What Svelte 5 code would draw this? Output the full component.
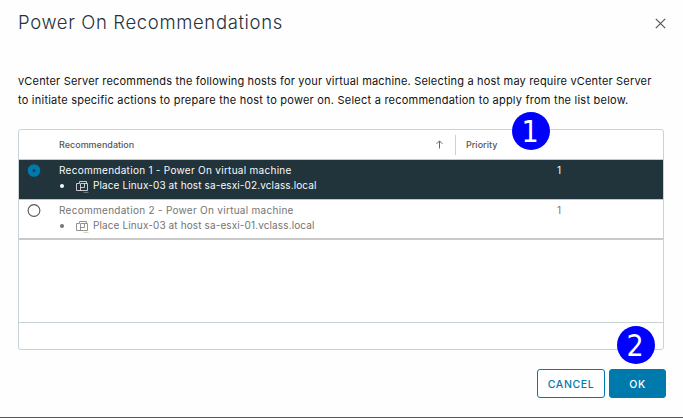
<script>
  const rows = [
    { id: 1, title: 'Recommendation 1 - Power On virtual machine', detail: 'Place Linux-03 at host sa-esxi-02.vclass.local', priority: 1 },
    { id: 2, title: 'Recommendation 2 - Power On virtual machine', detail: 'Place Linux-03 at host sa-esxi-01.vclass.local', priority: 1 }
  ];
  let selected = $state(1);
</script>

<div class="dialog">
  <header>
    <h1>Power On Recommendations</h1>
    <button class="close" aria-label="Close">
      <svg width="12" height="12" viewBox="0 0 12 12"><path d="M1.8 .8 11.2 10.2M11.2 .8 1.8 10.2" /></svg>
    </button>
  </header>

  <p class="intro">
    <span class="l1">vCenter Server recommends the following hosts for your virtual machine. Selecting a host may require vCenter Server</span>
    <span class="l2">to initiate specific actions to prepare the host to power on. Select a recommendation to apply from the list below.</span>
  </p>

  <div class="grid">
    <div class="head">
      <span class="h-rec">Recommendation</span>
      <svg class="sort" width="7" height="9" viewBox="0 0 7 9"><path d="M3.5 8.5V1M.6 3.8 3.5.9 6.4 3.8" /></svg>
      <span class="h-pri">Priority</span>
    </div>
    {#each rows as row (row.id)}
      <div class="row" class:selected={selected === row.id}>
        <button class="radio" aria-label={row.title} onclick={() => (selected = row.id)}>
          <svg width="14" height="14" viewBox="0 0 14 14">
            {#if selected === row.id}
              <circle cx="7" cy="6.5" r="6.3" fill="#0079ad" />
              <circle cx="7" cy="6.5" r="1.5" fill="#1b3f55" />
            {:else}
              <circle cx="7" cy="6.5" r="5.9" fill="#fff" stroke="#555" stroke-width="1.1" />
            {/if}
          </svg>
        </button>
        <div class="text">
          <div class="title">{row.title}</div>
          <div class="detail">
            <i class="dot"></i>
            <svg width="13" height="13" viewBox="0 0 13 13">
              <path d="M3.5 3.5V1.5h7v2M3.5 3.5h-3v7h5M4.5 10.5v-7h7v7zM4.5 7.5h4v-4" />
              <path class="base" d="M7.5 12.4h5" />
            </svg>
            <span class="place">{row.detail}</span>
          </div>
        </div>
        <div class="pri">{row.priority}</div>
      </div>
    {/each}
    <div class="empty"></div>
    <div class="foot"></div>
  </div>

  <footer>
    <button class="btn cancel">CANCEL</button>
    <button class="btn ok">OK</button>
  </footer>

  <div class="badge one">1</div>
  <div class="badge two">2</div>
</div>

<style>
  :global(body) { margin: 0; background: #fefefe; }
  .dialog {
    position: relative;
    box-sizing: border-box;
    width: 683px;
    height: 418px;
    padding: 0 17px 0 18px;
    border-bottom: 1px solid #555;
    background: #fefefe;
    font-family: Inter, 'Liberation Sans', sans-serif;
    overflow: hidden;
  }
  button { font-family: inherit; margin: 0; padding: 0; border: 0; background: none; }
  svg { display: block; fill: none; }
  header { display: flex; justify-content: space-between; height: 72px; }
  h1 {
    margin: 10px 0 0;
    font-size: 18.5px;
    line-height: 25px;
    font-weight: 300;
    letter-spacing: 0.64px;
    color: #25333d;
    white-space: nowrap;
    height: 25px;
  }
  .close { width: 12px; height: 12px; margin: 18px 0 0; }
  .close svg { stroke: #565656; stroke-width: 1.2; }
  .intro { margin: 0; height: 57px; color: #111; font-size: 11px; line-height: 19px; white-space: nowrap; }
  .intro span { display: block; }
  .l1 { letter-spacing: 0.18px; }
  .l2 { letter-spacing: 0.23px; }
  .grid {
    box-sizing: border-box;
    display: flex;
    flex-direction: column;
    width: 646px;
    height: 221px;
    border: 1px solid #c8d2d7;
    border-radius: 3px;
    background: #fff;
  }
  .head {
    display: flex;
    align-items: center;
    box-sizing: border-box;
    height: 30px;
    border-bottom: 1px solid #c3c9cc;
    font-size: 9px;
    font-weight: 500;
    color: #565656;
  }
  .h-rec { width: 377px; padding-left: 40px; }
  .sort { stroke: #666; stroke-width: 1; }
  .h-pri { margin-left: 12px; padding-left: 10px; border-left: 1px solid #c8d2d7; line-height: 20px; }
  .row {
    display: flex;
    box-sizing: border-box;
    height: 40px;
    border-bottom: 1px solid #c6c6c6;
    color: #747474;
    font-size: 10px;
  }
  .row:nth-of-type(3) { border-bottom: 2px solid #c9c9c9; }
  .row.selected { background: #21333b; color: #fafafa; }
  .radio { width: 32px; height: 14px; padding: 4px 0 0 8px; box-sizing: content-box; }
  .text { width: 479px; padding-top: 3px; line-height: 15px; white-space: nowrap; }
  .title { letter-spacing: 0.28px; }
  .detail { display: flex; align-items: center; height: 15px; }
  .dot { width: 4px; height: 4px; margin-left: 1px; border-radius: 50%; background: currentColor; }
  .detail svg { margin: 2px 4px 0 12px; stroke: currentColor; stroke-width: 0.9; opacity: 0.85; }
  .detail .base { stroke: #b9ad92; stroke-width: 0.7; }
  .place { letter-spacing: 0.12px; }
  .pri { width: 23px; padding-top: 3px; line-height: 15px; text-align: right; }
  .empty { flex: 1; }
  .foot { height: 26px; border-top: 1px solid #c8d2d7; }
  footer { display: flex; justify-content: flex-end; gap: 4px; margin-top: 19px; }
  .btn {
    box-sizing: border-box;
    height: 29px;
    padding-top: 1px;
    border: 1px solid #0079ad;
    border-radius: 3px;
    font-size: 10.5px;
    font-weight: 500;
    letter-spacing: 0.6px;
    color: #0079ad;
  }
  .cancel { width: 68px; background: #fff; }
  .ok { width: 57px; background: #0079ad; color: #fff; }
  .badge {
    position: absolute;
    width: 38px;
    height: 38px;
    border-radius: 50%;
    background: #00f;
    color: #fff;
    font: 30px/38px 'DejaVu Sans Condensed', 'DejaVu Sans', sans-serif;
    text-align: center;
  }
  .one { left: 512px; top: 112px; text-indent: -2px; line-height: 39px; }
  .two { left: 617px; top: 326px; text-indent: -2px; line-height: 39px; }
</style>
